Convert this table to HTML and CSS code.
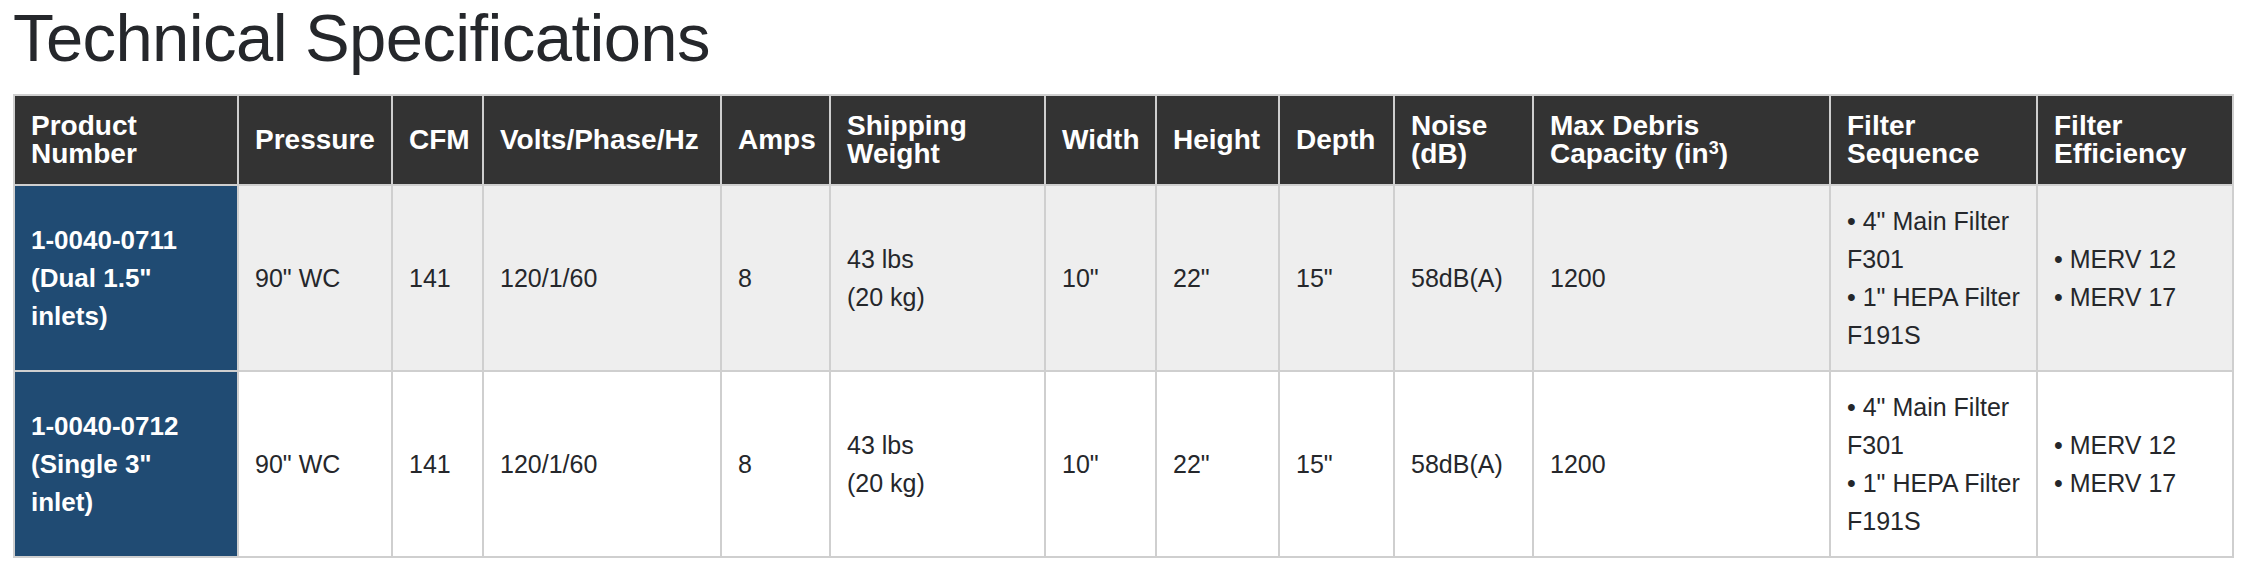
FILE: index.html
```html
<!DOCTYPE html>
<html lang="en">
<head>
<meta charset="utf-8">
<title>Technical Specifications</title>
<link rel="stylesheet" href="styles.css">
</head>
<body>
<main class="page">
  <h1 class="title">Technical Specifications</h1>
  <table class="specs">
    <colgroup>
      <col class="c-product">
      <col class="c-pressure">
      <col class="c-cfm">
      <col class="c-volts">
      <col class="c-amps">
      <col class="c-weight">
      <col class="c-width">
      <col class="c-height">
      <col class="c-depth">
      <col class="c-noise">
      <col class="c-debris">
      <col class="c-seq">
      <col class="c-eff">
    </colgroup>
    <thead>
      <tr>
        <th>Product Number</th>
        <th>Pressure</th>
        <th>CFM</th>
        <th class="nowrap">Volts/Phase/Hz</th>
        <th>Amps</th>
        <th>Shipping Weight</th>
        <th>Width</th>
        <th>Height</th>
        <th>Depth</th>
        <th>Noise (dB)</th>
        <th>Max Debris Capacity (in<sup>3</sup>)</th>
        <th>Filter Sequence</th>
        <th>Filter Efficiency</th>
      </tr>
    </thead>
    <tbody>
      <tr class="row-shaded">
        <th class="product" scope="row">1-0040-0711<br>(Dual 1.5"<br>inlets)</th>
        <td>90" WC</td>
        <td>141</td>
        <td>120/1/60</td>
        <td>8</td>
        <td>43 lbs<br>(20 kg)</td>
        <td>10"</td>
        <td>22"</td>
        <td>15"</td>
        <td>58dB(A)</td>
        <td>1200</td>
        <td>• 4" Main Filter F301<br>• 1" HEPA Filter F191S</td>
        <td>• MERV 12<br>• MERV 17</td>
      </tr>
      <tr class="row-plain">
        <th class="product" scope="row">1-0040-0712<br>(Single 3"<br>inlet)</th>
        <td>90" WC</td>
        <td>141</td>
        <td>120/1/60</td>
        <td>8</td>
        <td>43 lbs<br>(20 kg)</td>
        <td>10"</td>
        <td>22"</td>
        <td>15"</td>
        <td>58dB(A)</td>
        <td>1200</td>
        <td>• 4" Main Filter F301<br>• 1" HEPA Filter F191S</td>
        <td>• MERV 12<br>• MERV 17</td>
      </tr>
    </tbody>
  </table>
</main>
</body>
</html>
```

FILE: styles.css
```css
* {
  box-sizing: border-box;
}

html, body {
  margin: 0;
  padding: 0;
  background: #ffffff;
}

body {
  font-family: "Liberation Sans", Arial, sans-serif;
  color: #25272b;
}

.page {
  padding: 0 10px 0 13px;
}

.title {
  margin: 0 0 19px 0;
  font-size: 67px;
  line-height: 75px;
  font-weight: 400;
  letter-spacing: -0.6px;
  color: #25272b;
}

.specs {
  width: 2221px;
  table-layout: fixed;
  border-collapse: separate;
  border-spacing: 0;
  border-top: 2px solid #cfcfcf;
  border-left: 2px solid #cfcfcf;
}

.specs th,
.specs td {
  border-right: 2px solid #cfcfcf;
  border-bottom: 2px solid #cfcfcf;
  padding: 16px;
  text-align: left;
  vertical-align: middle;
}

.specs thead th {
  background: #333333;
  color: #ffffff;
  font-size: 28px;
  line-height: 28px;
  font-weight: 700;
}

.specs thead th sup {
  font-size: 18px;
  line-height: 0;
  vertical-align: 9px;
}

.specs tbody td {
  font-size: 25px;
  line-height: 38px;
  font-weight: 400;
  color: #25272b;
}

.specs tbody th.product {
  background: #204b73;
  color: #ffffff;
  font-size: 26px;
  line-height: 38px;
  font-weight: 700;
}

.row-shaded td {
  background: #eeeeee;
}

.row-plain td {
  background: #ffffff;
}

.nowrap {
  white-space: nowrap;
}

.c-product { width: 224px; }
.c-pressure { width: 154px; }
.c-cfm { width: 91px; }
.c-volts { width: 238px; }
.c-amps { width: 109px; }
.c-weight { width: 215px; }
.c-width { width: 111px; }
.c-height { width: 123px; }
.c-depth { width: 115px; }
.c-noise { width: 139px; }
.c-debris { width: 297px; }
.c-seq { width: 207px; }
.c-eff { width: 196px; }
```
